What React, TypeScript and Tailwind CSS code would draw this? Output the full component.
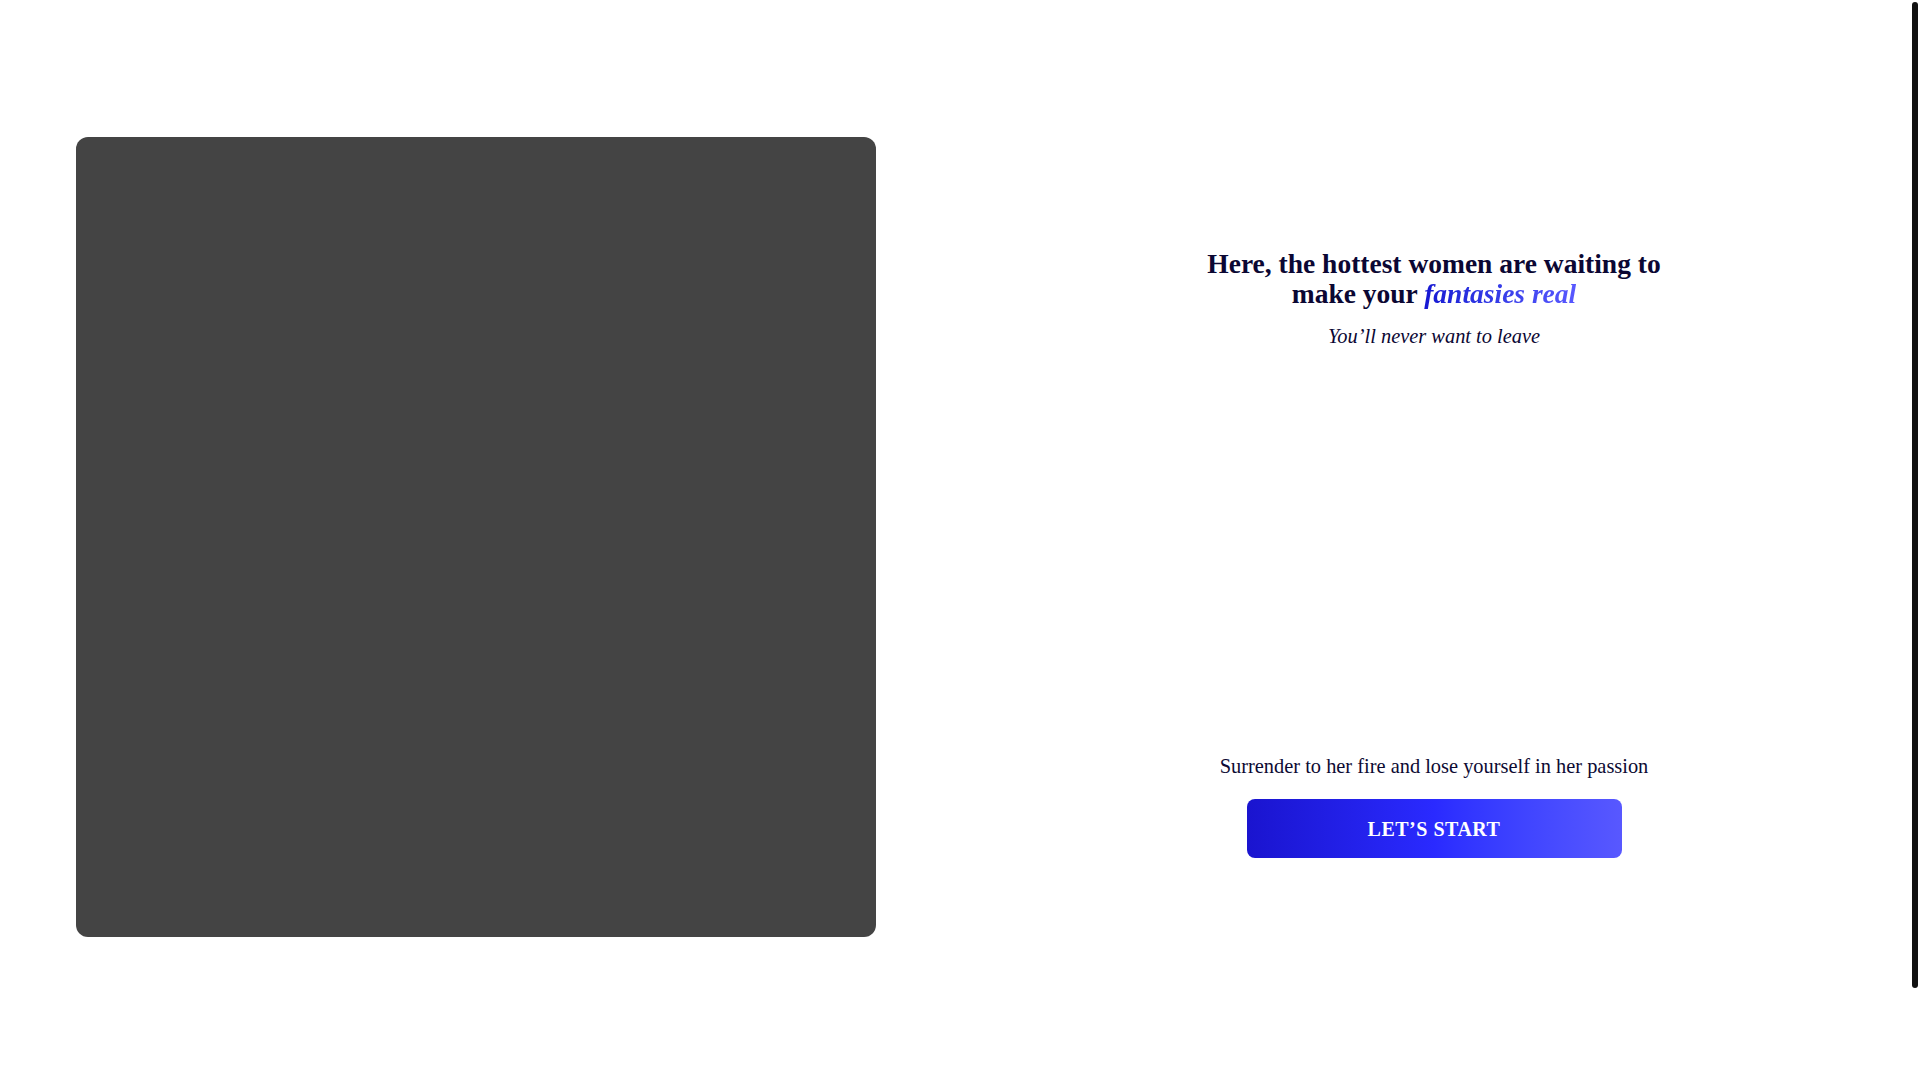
import React from 'react';

export default function App() {
    return (
        <div
            className="relative h-screen w-full overflow-y-scroll bg-white [&::-webkit-scrollbar]:hidden"
            style={{ fontFamily: '"Liberation Serif", "Times New Roman", serif' }}
        >
            <div className="flex gap-[80px] pl-[76px] pr-[8px] pt-[137px] pb-[246px]">
                {/* Media placeholder */}
                <div className="w-[800px] h-[800px] shrink-0 rounded-xl bg-[#444444]" />

                {/* Copy */}
                <div className="flex-1 flex flex-col items-center text-center pt-[112px]">
                    <h1 className="text-[27.5px] leading-[30px] font-bold text-[#0b0733] max-w-[480px]">
                        Here, the hottest women are waiting to make your{' '}
                        <span className="italic bg-gradient-to-r from-[#1616d2] to-[#5858ff] bg-clip-text text-transparent">
                            fantasies real
                        </span>
                    </h1>
                    <p className="mt-[13px] text-[20.4px] leading-[28px] italic text-[#0b0733]">
                        You’ll never want to leave
                    </p>

                    {/* empty media area */}
                    <div className="h-[402px]" />

                    <p className="text-[20.4px] leading-[28px] text-[#0d0a33]">
                        Surrender to her fire and lose yourself in her passion
                    </p>
                    <button className="mt-[19px] w-[375px] h-[59px] rounded-lg bg-gradient-to-r from-[#1a14cf] via-[#2a2aff] to-[#5858ff] text-white text-[20px] font-bold tracking-wide">
                        LET’S START
                    </button>
                </div>
            </div>

            {/* scrollbar thumb */}
            <div className="fixed top-[2px] right-[2px] w-[6px] h-[986px] rounded-full bg-[#111111]" />
        </div>
    );
}
